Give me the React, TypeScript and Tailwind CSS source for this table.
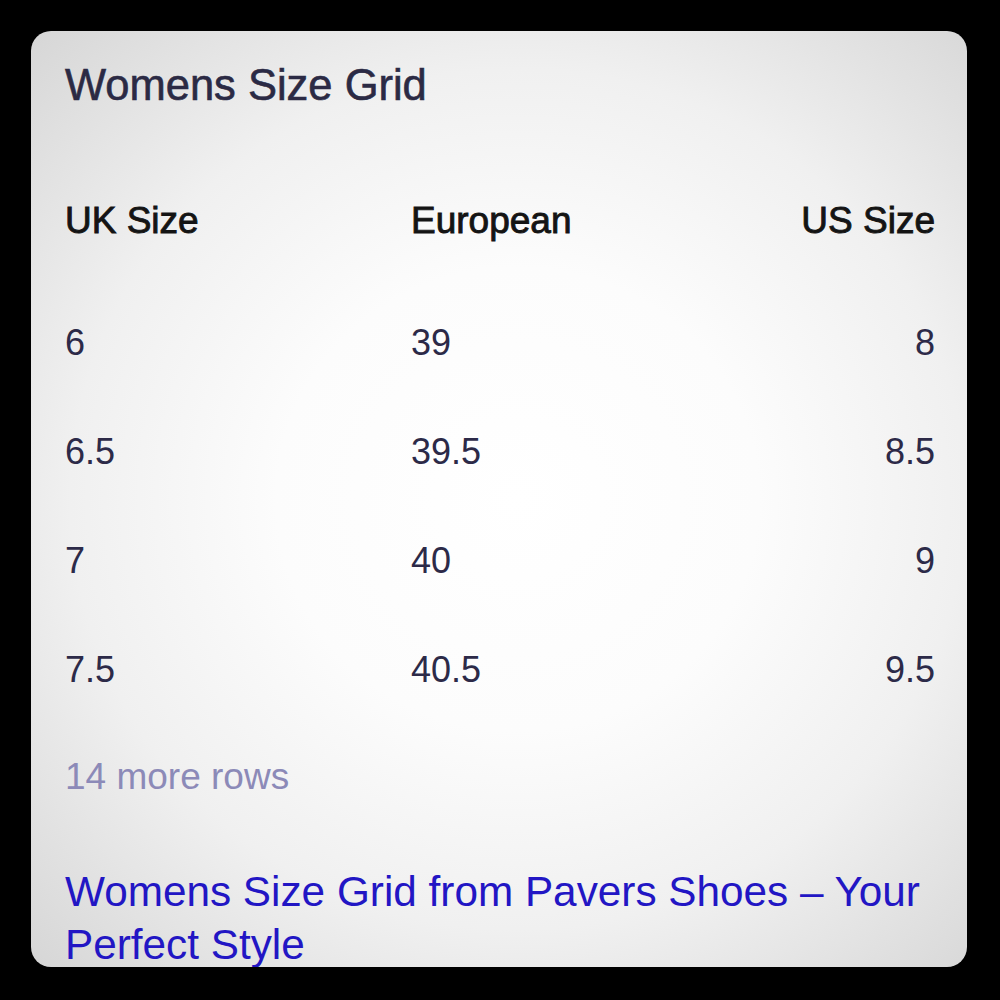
const rows = [
  ["6", "39", "8"],
  ["6.5", "39.5", "8.5"],
  ["7", "40", "9"],
  ["7.5", "40.5", "9.5"],
];

export default function App() {
  return (
    <div className="min-h-screen bg-black p-[31px] font-['Liberation_Sans',Arial,sans-serif]">
      <div className="h-[936px] w-[936px] overflow-hidden rounded-[20px] bg-[radial-gradient(ellipse_at_52%_50%,#ffffff_0%,#fcfcfc_35%,#f0f0f0_65%,#d6d6d6_100%)] pl-[34px] pr-[32px] pt-[24px]">
        <h1 className="h-[60px] text-[43.5px] leading-[60px] text-[#2b2a44] [-webkit-text-stroke:0.6px_#2b2a44]">
          Womens Size Grid
        </h1>

        <div className="mt-[76px] grid h-[60px] grid-cols-[346px_1fr_auto] items-center text-[37px] leading-[60px] text-[#141414] [-webkit-text-stroke:0.9px_#141414]">
          <span>UK Size</span>
          <span>European</span>
          <span className="text-right">US Size</span>
        </div>

        <div className="mt-[37px] flex flex-col">
          {rows.map((r) => (
            <div
              key={r[0]}
              className="grid h-[109px] grid-cols-[346px_1fr_auto] items-center text-[36px] leading-[50px] text-[#2c2a48]"
            >
              <span>{r[0]}</span>
              <span>{r[1]}</span>
              <span className="text-right">{r[2]}</span>
            </div>
          ))}
        </div>

        <div className="mt-[28px] h-[50px] text-[37px] leading-[50px] text-[#8c8ab8]">14 more rows</div>

        <a className="mt-[63px] block text-[42.3px] leading-[53px] text-[#2216c4]">
          Womens Size Grid from Pavers Shoes – Your Perfect Style
        </a>
      </div>
    </div>
  );
}
